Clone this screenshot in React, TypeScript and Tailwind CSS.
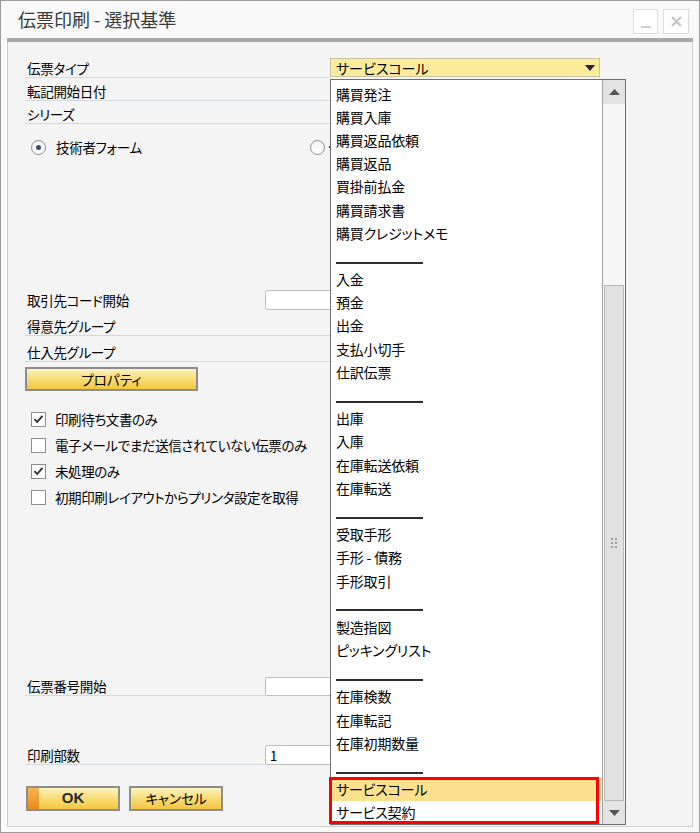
import React from "react";

const FONT = "[font-family:'Noto_Sans_CJK_JP',sans-serif] [font-feature-settings:'palt']";

type Item = { t: string } | { sep: true };

const items: Item[] = [
  { t: "購買発注" },
  { t: "購買入庫" },
  { t: "購買返品依頼" },
  { t: "購買返品" },
  { t: "買掛前払金" },
  { t: "購買請求書" },
  { t: "購買クレジットメモ" },
  { sep: true },
  { t: "入金" },
  { t: "預金" },
  { t: "出金" },
  { t: "支払小切手" },
  { t: "仕訳伝票" },
  { sep: true },
  { t: "出庫" },
  { t: "入庫" },
  { t: "在庫転送依頼" },
  { t: "在庫転送" },
  { sep: true },
  { t: "受取手形" },
  { t: "手形 - 債務" },
  { t: "手形取引" },
  { sep: true },
  { t: "製造指図" },
  { t: "ピッキングリスト" },
  { sep: true },
  { t: "在庫検数" },
  { t: "在庫転記" },
  { t: "在庫初期数量" },
  { sep: true },
  { t: "サービスコール" },
  { t: "サービス契約" },
];

function Check() {
  return (
    <div className="w-[15px] h-[15px] border border-[#8e8e8e] bg-white flex items-center justify-center">
      <svg width="11" height="10" viewBox="0 0 11 10">
        <path d="M1.5 5.2 L4.2 8 L9.5 1.8" fill="none" stroke="#2a2a2a" strokeWidth="1.8" />
      </svg>
    </div>
  );
}

function Box() {
  return <div className="w-[15px] h-[15px] border border-[#8e8e8e] bg-white" />;
}

function CheckRow({ checked, label }: { checked: boolean; label: string }) {
  return (
    <div className="h-[26px] flex items-center pl-[6px] gap-[9px]">
      {checked ? <Check /> : <Box />}
      <span className="text-[13.5px] tracking-[-0.4px] leading-[16px] text-black">{label}</span>
    </div>
  );
}

function Radio({ on }: { on: boolean }) {
  return (
    <div className="w-[15px] h-[15px] rounded-full border border-[#8c8c8c] bg-gradient-to-b from-[#f2f2f2] to-white flex items-center justify-center">
      {on && <div className="w-[5px] h-[5px] rounded-full bg-[#3d4b6e]" />}
    </div>
  );
}

function LabelRow({ label, w, h }: { label: string; w: string; h: string }) {
  return (
    <div className={`${w} ${h} border-b border-[#d3d9e1] flex items-end pb-[1px] leading-[16px] text-[13.5px] tracking-[-0.3px] text-black pl-[2px]`}>
      <span>{label}</span>
    </div>
  );
}

const yellowBtn =
  "bg-gradient-to-b from-[#fdf3c0] via-[#f9dc74] to-[#f3c63d] border-2 border-[#8d8d8d] flex items-center justify-center text-[13.5px] text-black";

export default function App() {
  return (
    <div className={`${FONT} w-[700px] h-[833px] bg-[#f9f9f9] border border-[#9c9c9c] flex flex-col`}>
      {/* title bar */}
      <div className="h-[37px] flex items-center pl-[17px] pr-[10px]">
        <span className="text-[18px] text-[#3a3a3a]">伝票印刷 - 選択基準</span>
        <div className="ml-auto flex gap-[5px] mt-[3px]">
          <div className="w-[25px] h-[25px] border border-[#dedede] bg-white flex items-end justify-center pb-[5px]">
            <div className="w-[10px] h-[2px] bg-[#cfcfcf]" />
          </div>
          <div className="w-[26px] h-[25px] border border-[#dedede] bg-white flex items-center justify-center">
            <svg width="11" height="11" viewBox="0 0 11 11">
              <path d="M1 1 L10 10 M10 1 L1 10" stroke="#c4c4c4" strokeWidth="2.2" />
            </svg>
          </div>
        </div>
      </div>
      <div className="mx-[6px] h-[4px] bg-[#a8a8a8]" />

      {/* panel */}
      <div className="relative mx-[6px] mb-[5px] flex-1 bg-[#f4f4f4] border-x border-b border-[#cdcdcd] pl-[17px] pt-[13px] flex flex-col">
        {/* row 1 */}
        <div className="flex items-start">
          <LabelRow label="伝票タイプ" w="w-[305px]" h="h-[23px]" />
          <div className="mt-[3px] w-[270px] h-[19px] bg-[#fdeb9c] border border-[#c9c4a0] flex items-center pl-[5px] pr-[4px] text-[14px] leading-none text-black">
            <span>サービスコール</span>
            <svg className="ml-auto" width="10" height="6" viewBox="0 0 10 6">
              <path d="M0 0 L10 0 L5 6 Z" fill="#1f2430" />
            </svg>
          </div>
        </div>
        <LabelRow label="転記開始日付" w="w-[305px]" h="h-[23px]" />
        <LabelRow label="シリーズ" w="w-[305px]" h="h-[23px]" />

        {/* radio row */}
        <div className="mt-[15px] h-[16px] flex items-center pl-[6px]">
          <Radio on />
          <span className="ml-[10px] text-[13.5px] tracking-[-0.3px] leading-[16px] text-black">技術者フォーム</span>
          <div className="ml-[168px]">
            <Radio on={false} />
          </div>
          <div className="ml-[2px] w-[6px] h-[16px] overflow-hidden">
            <div className="w-[6px] h-[16px] flex items-center justify-center">
              <div className="w-[2px] h-[2px] bg-[#333]" />
            </div>
          </div>
        </div>

        {/* business partner code */}
        <div className="mt-[135px] flex items-center h-[20px]">
          <div className="w-[240px] text-[13.5px] tracking-[-0.3px] leading-[16px] text-black pl-[2px]">取引先コード開始</div>
          <div className="w-[90px] h-[20px] rounded-[3px] border border-[#bdbdbd] bg-white" />
        </div>
        <LabelRow label="得意先グループ" w="w-[305px]" h="h-[26px]" />
        <LabelRow label="仕入先グループ" w="w-[305px]" h="h-[26px]" />

        <div className={`mt-[5px] w-[173px] h-[24px] ${yellowBtn}`}>プロパティ</div>

        <div className="mt-[15px] flex flex-col">
          <CheckRow checked label="印刷待ち文書のみ" />
          <CheckRow checked={false} label="電子メールでまだ送信されていない伝票のみ" />
          <CheckRow checked label="未処理のみ" />
          <CheckRow checked={false} label="初期印刷レイアウトからプリンタ設定を取得" />
        </div>

        {/* document number */}
        <div className="mt-[167px] flex items-start">
          <LabelRow label="伝票番号開始" w="w-[240px]" h="h-[19px]" />
          <div className="w-[90px] h-[19px] rounded-[2px] border border-[#bdbdbd] bg-white" />
        </div>

        {/* copies */}
        <div className="mt-[49px] flex items-start">
          <LabelRow label="印刷部数" w="w-[240px]" h="h-[20px]" />
          <div className="w-[90px] h-[20px] rounded-[2px] border border-[#bdbdbd] bg-white flex items-center pl-[4px] text-[13px] leading-none text-black">
            1
          </div>
        </div>

        {/* buttons */}
        <div className="mt-[21px] flex gap-[9px] pl-[1px]">
          <div className={`relative w-[94px] h-[25px] ${yellowBtn} overflow-hidden`}>
            <div className="absolute left-0 top-0 bottom-0 w-[11px] bg-gradient-to-b from-[#f7b34a] to-[#ec8a12]" />
            <span className="text-[15px] font-bold text-[#2a2a2a] [font-family:'Liberation_Sans',sans-serif]">OK</span>
          </div>
          <div className={`w-[94px] h-[25px] ${yellowBtn}`}>キャンセル</div>
        </div>

        {/* open dropdown list */}
        <div className="absolute left-[322px] top-[37px] w-[296px] h-[746px] bg-white border border-[#6f6f6f] flex">
          <div className="flex-1 pt-[2px] flex flex-col">
            {items.map((it, i) =>
              "sep" in it ? (
                <div key={i} className="h-[23.2px] flex items-end pb-[4px] pl-[5px]">
                  <div className="w-[87px] h-[2px] bg-[#2f2f2f]" />
                </div>
              ) : (
                <div
                  key={i}
                  className={`h-[23.2px] flex items-center pl-[5px] text-[14px] tracking-[-0.2px] leading-none text-black ${
                    it.t === "サービスコール" ? "bg-[#fde08c]" : ""
                  }`}
                >
                  {it.t}
                </div>
              )
            )}
          </div>
          {/* scrollbar */}
          <div className="w-[23px] border-l border-[#a3a3a3] flex flex-col bg-[#f6f6f6]">
            <div className="h-[24px] bg-[#e3e3e3] flex items-center justify-center">
              <svg width="11" height="6" viewBox="0 0 11 6">
                <path d="M0 6 L11 6 L5.5 0 Z" fill="#555" />
              </svg>
            </div>
            <div className="h-[181px]" />
            <div className="flex-1 mx-[1px] bg-[#e1e1e1] border border-[#b9b9b9] flex items-center justify-center">
              <div className="grid grid-cols-2 gap-[2px]">
                {Array.from({ length: 6 }).map((_, k) => (
                  <div key={k} className="w-[2px] h-[2px] bg-[#9e9e9e]" />
                ))}
              </div>
            </div>
            <div className="h-[23px] bg-[#e3e3e3] flex items-center justify-center">
              <svg width="11" height="6" viewBox="0 0 11 6">
                <path d="M0 0 L11 0 L5.5 6 Z" fill="#555" />
              </svg>
            </div>
          </div>
        </div>

        {/* red annotation */}
        <div className="absolute left-[321px] top-[735px] w-[270px] h-[47px] border-[3px] border-[#ff0000]" />
      </div>
    </div>
  );
}
